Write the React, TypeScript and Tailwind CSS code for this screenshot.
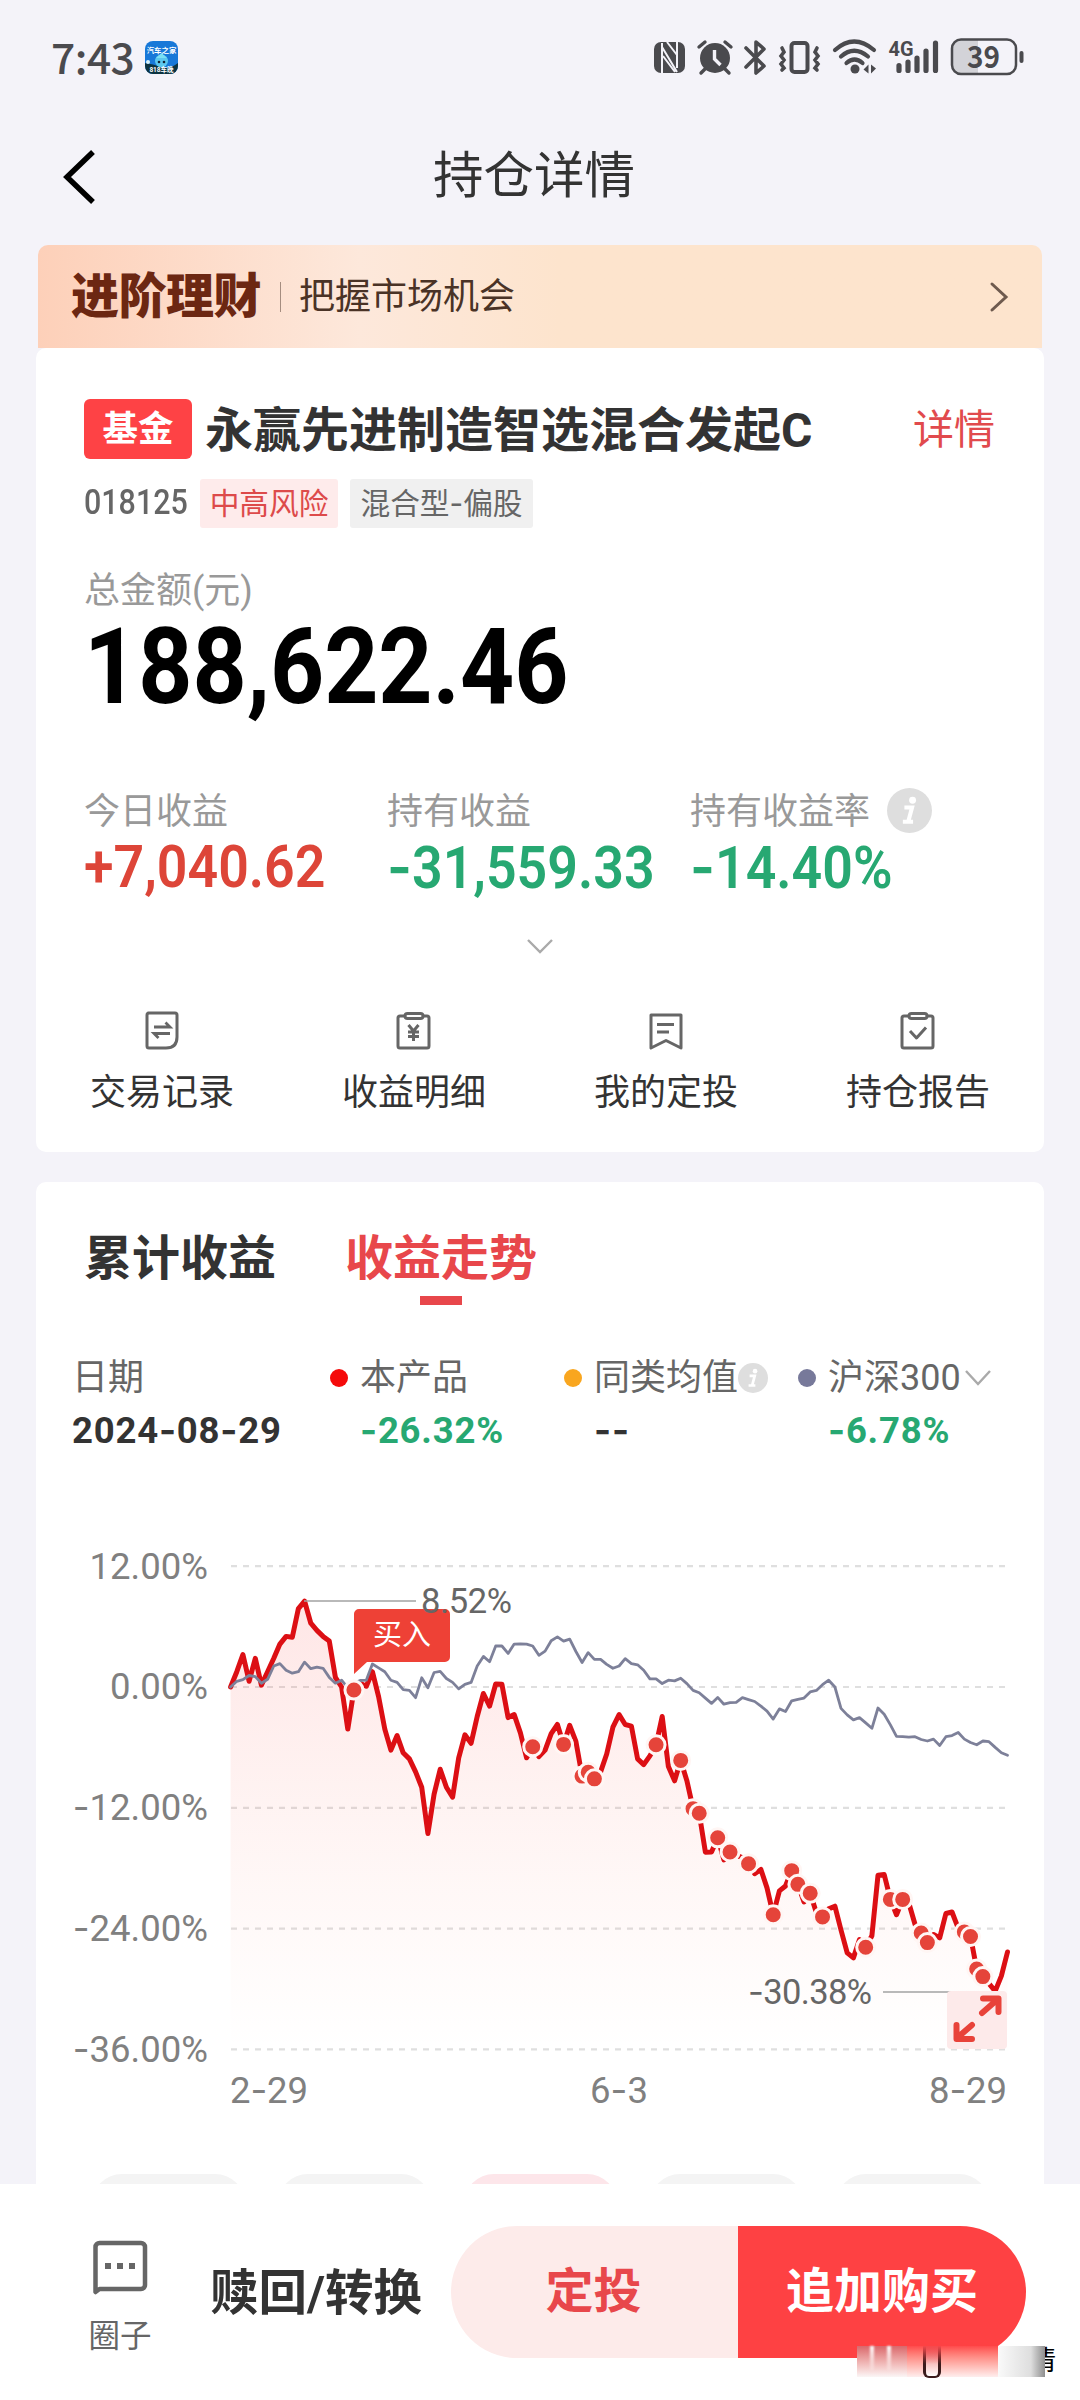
import type { ReactNode } from 'react'

const stats = [
  { label: '今日收益', value: '+7,040.62', color: 'text-[#dd4538]' },
  { label: '持有收益', value: '-31,559.33', color: 'text-[#27a872]' },
  { label: '持有收益率', value: '-14.40%', color: 'text-[#27a872]', info: true },
]

const legend = [
  { name: '本产品', value: '-26.32%', dot: 'bg-[#f50a0a]', color: 'text-[#27a872]' },
  { name: '同类均值', value: '--', dot: 'bg-[#f9a61f]', color: 'text-[#333333]', info: true },
  { name: '沪深300', value: '-6.78%', dot: 'bg-[#77799a]', color: 'text-[#27a872]', arrow: true },
]

// daily return in percent, 2-29 .. 8-29
const product = [
  0, 1.52, 3.23, 0.57, 2.85, 0.19, 1.52, 2.85, 4.26, 5.02, 4.94, 7.79, 8.52, 6.34, 5.62, 5.02, 4.56, 0.95, 0, -4.18,
  -0.3, 0.38, 0.08, 1.52, -0.95, -4.18, -6.27, -4.83, -6.53, -7.14, -8.43, -9.95, -14.55, -10.64, -8.17, -9.95,
  -10.94, -7.03, -4.75, -5.59, -2.93, -0.65, -1.9, 0.3, 0.27, -3.04, -2.74, -4.56, -7.03, -5.93, -6.91, -6.27,
  -4.64, -3.72, -5.7, -3.8, -5.4, -8.85, -8.47, -9.12, -8.43, -6.65, -3.99, -2.74, -3.72, -3.88, -7.14, -7.71,
  -6.84, -5.74, -2.93, -7.9, -9.31, -7.29, -9.31, -12.08, -12.54, -16.41, -16.38, -14.97, -17.17, -16.38, -16.72,
  -16.95, -17.55, -18.54, -18.12, -19.95, -22.61, -20.25, -19.76, -18.24, -19.6, -21.35, -20.48, -22.42, -22.83,
  -22.04, -21.77, -24.13, -26.41, -26.9, -25.08, -25.84, -24.7, -18.69, -18.62, -21.09, -22.61, -21.09, -21.47,
  -23.56, -24.43, -25.38, -24.58, -24.92, -22.49, -22.34, -23.94, -24.32, -24.77, -28, -28.76, -29.45, -30.2,
  -28.69, -26.32,
]

const csi300 = [
  0, 0.57, 0.72, 1.14, 1.03, 0.38, 0.76, 2.09, 2.32, 1.67, 1.37, 1.52, 2.47, 1.82, 1.98, 1.86, 0.95, 0.38, 0.68,
  -0.08, 0.38, 0.65, 0.68, 2.28, 1.9, 1.52, 0.68, 0.46, -0.27, -0.34, -1.06, 0.91, -0.08, 1.44, 1.56, 0.84, 0.46,
  -0.19, 0.27, 0.46, 2.09, 3.04, 2.51, 4.07, 4.07, 3.34, 4.26, 4.29, 4.26, 4.07, 3.15, 3.57, 4.6, 4.98, 4.56, 4.75,
  3.53, 2.43, 3.42, 2.74, 2.74, 2.24, 1.86, 2.09, 2.81, 2.32, 2.2, 1.67, 0.8, 0.8, 0.34, 0.68, 0.61, 0.87, 0.34,
  -0.34, -0.57, -1.1, -1.63, -1.03, -1.71, -1.56, -1.52, -1.06, -1.25, -1.44, -1.9, -2.39, -3.19, -2.17, -2.43,
  -1.37, -1.22, -1.1, -0.49, -0.34, 0.23, 0.68, 0, -2.13, -2.77, -3.27, -3.04, -3.57, -4.1, -2.09, -2.7, -3.76,
  -4.9, -4.94, -4.98, -4.94, -5.21, -5.36, -5.17, -5.81, -4.94, -4.83, -4.52, -5.17, -5.51, -5.74, -5.36, -5.43,
  -6, -6.53, -6.78,
]

const buys = [
  20, 49, 54, 57, 58, 59, 69, 73, 75, 76, 79, 81, 84, 88, 91, 92, 94, 96, 103, 107, 109, 112, 113, 119, 120, 121, 122,
]

const px = (i: number) => 194.6 + i * 6.166
const py = (v: number) => 147 - v * 10.07
const toPoints = (list: number[]) => list.map((v, i) => `${px(i).toFixed(1)},${py(v).toFixed(1)}`).join(' ')

// hyphens are set in Inter, its dash is wide enough for figures
function Num({ children }: { children: string }) {
  return (
    <>
      {children.split(/(-)/).map((part, i) =>
        part === '-' ? (
          <span key={i} className="font-['Inter']">-</span>
        ) : (
          part
        )
      )}
    </>
  )
}

function Info({ className }: { className: string }) {
  return (
    <svg viewBox="0 0 44 44" className={className}>
      <circle cx="22" cy="22" r="22" fill="#dedede" />
      <circle cx="25" cy="12" r="3.4" fill="#fff" />
      <path d="M17 19h7.5l-3.5 13M15.5 33h10" fill="none" stroke="#fff" strokeWidth="4" />
    </svg>
  )
}

function StatusBar() {
  return (
    <div className="flex h-[116px] items-start pl-[51px] pt-[38px] text-[#4a4a4e]">
      <div className="w-[94px] font-['Noto_Sans_CJK_SC'] text-[42.500px] font-medium leading-[36px] tracking-[-0.5px]">7:43</div>
      <svg width="33" height="33" viewBox="0 0 33 33" className="mt-[3px]">
        <defs>
          <clipPath id="app"><rect width="33" height="33" rx="8" /></clipPath>
        </defs>
        <g clipPath="url(#app)">
          <rect width="33" height="33" fill="#1878d8" />
          <path d="M0 22q8 1 16 4t17-4v11H0z" fill="#0c3340" />
          <circle cx="16.5" cy="20" r="6.5" fill="#5cc8ee" />
          <path d="M11 17l5.5-5 5.5 5z" fill="#7ce0f4" />
          <circle cx="14" cy="21" r="1.3" fill="#123" />
          <circle cx="19" cy="21" r="1.3" fill="#123" />
          <circle cx="3" cy="21" r="2" fill="#d8f2fa" />
          <text x="16.5" y="12" fontSize="7.4" fontWeight="700" fill="#fff" textAnchor="middle">汽车之家</text>
          <text x="16.5" y="31" fontSize="6.5" fontWeight="700" fill="#fff" textAnchor="middle">818车晚</text>
        </g>
      </svg>
      <svg width="380" height="40" viewBox="0 0 380 40" className="ml-[466px] overflow-visible" fill="none" stroke="#4a4a4e">
        {/* nfc */}
        <rect x="10" y="4" width="31" height="31" rx="7" fill="#4a4a4e" stroke="none" />
        <path d="M18 35V5M18 9l15 25M19 18l12 16M33 30V4M23 4l10 13" stroke="#f4f3f9" strokeWidth="2" />
        {/* alarm */}
        <circle cx="71" cy="20" r="15" fill="#4a4a4e" stroke="none" />
        <path d="M55 9l6-5M87 9l-6-5M61 31l-4 4M81 31l4 4" strokeWidth="3.4" strokeLinecap="round" />
        <path d="M70.500 12v9l6 6" stroke="#f4f3f9" strokeWidth="3.400" />
        {/* bluetooth */}
        <path d="M102 10l18 18-8 7V4l8 7-18 18" strokeWidth="3.600" strokeLinejoin="round" strokeLinecap="round" />
        {/* vibrate */}
        <rect x="147.500" y="5" width="16" height="29" rx="3" strokeWidth="4" />
        <path d="M138 10l2 4-3 4 3 4-3 4 3 4-2 2M173 10l-2 4 3 4-3 4 3 4-3 4 2 2" strokeWidth="3.600" strokeLinecap="round" />
        {/* wifi */}
        <path d="M191 12q19-17 39 0M197 18.500q13-11.500 27 0M202.500 25q8-7 16 0" strokeWidth="4.200" strokeLinecap="round" />
        <circle cx="211" cy="31" r="4.500" fill="#4a4a4e" stroke="none" />
        <path d="M219.500 31.500l5-5v9zM232 30.500l-5-4v9z" fill="#4a4a4e" stroke="none" />
        {/* signal */}
        <text x="244.500" y="18" fontSize="21" fontWeight="700" fill="#4a4a4e" stroke="none" textLength="25" lengthAdjust="spacingAndGlyphs" className="font-['Roboto']">4G</text>
        <path d="M255 27.500v5M264 24v8.500M273 20v12.500M282 13v19.500M291.500 5v27.500" strokeWidth="5.200" strokeLinecap="round" />
        {/* battery */}
        <path d="M334 2h-17a9 9 0 00-9 9v16a9 9 0 009 9h17z" fill="#d3d3d8" stroke="none" />
        <rect x="308" y="1.500" width="64" height="34.500" rx="9" strokeWidth="2.500" />
        <path d="M377.500 15v8" strokeWidth="4" strokeLinecap="round" />
        <text x="339.500" y="30" fontSize="31" fontWeight="700" fill="#4a4a4e" stroke="none" textAnchor="middle" textLength="33" lengthAdjust="spacingAndGlyphs" className="font-['Noto_Sans_CJK_SC']">39</text>
      </svg>
    </div>
  )
}

function Header() {
  return (
    <div className="flex h-[129px] items-start">
      <svg width="34" height="58" viewBox="0 0 34 58" className="ml-[62px] mt-[32px]" fill="none" stroke="#000" strokeWidth="5.500">
        <path d="M31 4L5 29l26 25" />
      </svg>
      <div className="ml-[337px] mt-[35px] text-[50.500px] leading-none text-[#333333]">持仓详情</div>
    </div>
  )
}

function Banner() {
  return (
    <div className="mx-[38px] flex h-[103px] items-center rounded-t-[10px] bg-linear-to-r from-[#fdd0b9] via-[#fde8db] via-32% to-[#fde4cd] to-52% pl-[33px] pr-[33px]">
      <div className="w-[192px] text-[48px] font-black leading-none tracking-[-0.5px] text-[#6c2712]">进阶理财</div>
      <div className="ml-[17px] h-[30px] w-px bg-[#a58d80]" />
      <div className="ml-[18px] text-[36px] leading-none text-[#4a3326]">把握市场机会</div>
      <svg width="20" height="32" viewBox="0 0 20 32" className="ml-auto" fill="none" stroke="#6e5a4e" strokeWidth="3" strokeLinecap="round">
        <path d="M3 3l14 13L3 29" />
      </svg>
    </div>
  )
}

function Action({ label, children }: { label: string; children: ReactNode }) {
  return (
    <div className="flex flex-1 flex-col items-center">
      <svg width="40" height="42" viewBox="0 0 40 42" fill="none" stroke="#666" strokeWidth="3" strokeLinejoin="round">
        {children}
      </svg>
      <div className="mt-[23px] text-[36px] leading-none text-[#333333]">{label}</div>
    </div>
  )
}

function Summary() {
  return (
    <div className="mx-[36px] h-[804px] rounded-[10px] bg-white pt-[51px]">
      <div className="flex h-[60px] items-center pl-[48px] pr-[49px]">
        <div className="flex h-[60px] w-[108px] items-center justify-center rounded-[6px] bg-[#fe4245] pt-[2px] text-[35.500px] font-bold leading-none text-white">基金</div>
        <div className="ml-[13px] pt-[3px] text-[48px] font-bold leading-none text-[#333333]">永赢先进制造智选混合发起C</div>
        <div className="ml-auto pt-[2px] text-[41px] leading-none text-[#e14a4d]">详情</div>
      </div>
      <div className="mt-[20px] flex h-[49px] items-center pl-[48px]">
        <div className="w-[116px]">
          <div className="w-[116px] origin-left scale-x-[0.87] pb-[3px] text-[35px] font-medium leading-none text-[#666666]">018125</div>
        </div>
        <div className="flex h-[49px] w-[138px] items-center justify-center rounded-[3px] bg-[#feebeb] text-[29.700px] leading-none text-[#dd4a4a]">中高风险</div>
        <div className="ml-[12px] flex h-[49px] w-[183px] items-center justify-center whitespace-nowrap rounded-[3px] bg-[#f0f0f0] text-[29.700px] leading-none text-[#666666]">
          <Num>混合型-偏股</Num>
        </div>
      </div>
      <div className="ml-[48px] mt-[45px] text-[36px] leading-[36px] text-[#999999]">总金额(元)</div>
      <div className="mt-[6px] ml-[48px] w-[530px] origin-left scale-x-[0.9] text-[105px] font-bold leading-none text-black">188,622.46</div>

      <div className="mt-[74px] flex pl-[48px]">
        {stats.map((s) => (
          <div key={s.label} className="w-[303px]">
            <div className="flex h-[36px] items-center text-[36px] leading-none text-[#999999]">
              {s.label}
              {s.info && <Info className="-mt-[3px] ml-[17px] size-[45px]" />}
            </div>
            <div className={`mt-[7px] w-[303px] origin-left scale-x-[0.91] whitespace-nowrap text-[59px] font-semibold leading-none ${s.color}`}>
              <Num>{s.value}</Num>
            </div>
          </div>
        ))}
      </div>

      <svg width="28" height="18" viewBox="0 0 28 18" className="mx-auto mt-[41px]" fill="none" stroke="#aaa" strokeWidth="2.400">
        <path d="M2 2l12 12L26 2" />
      </svg>

      <div className="mt-[54px] flex">
        <Action label="交易记录">
          <path d="M6 3h27a2 2 0 012 2v22q0 11-11 11H7a2 2 0 01-2-2V5a2 2 0 012-2z" />
          <path d="M12 17h16l-4.500-4.500M28 23.500H12l4.500 4.500" strokeWidth="2.800" strokeLinejoin="miter" />
        </Action>
        <Action label="收益明细">
          <path d="M11 6H6a2 2 0 00-2 2v28a2 2 0 002 2h27a2 2 0 002-2V8a2 2 0 00-2-2h-5" />
          <rect x="11" y="3.500" width="18" height="5" rx="2.500" />
          <path d="M14.500 15l5 6 5-6M19.500 21v10M14 22h11M14 26.500h11" strokeWidth="3" />
        </Action>
        <Action label="我的定投">
          <path d="M5 5h30v33l-15-7.500L5 38z" />
          <path d="M11 14.500h17M11 22h12" />
        </Action>
        <Action label="持仓报告">
          <path d="M11 6H6a2 2 0 00-2 2v28a2 2 0 002 2h27a2 2 0 002-2V8a2 2 0 00-2-2h-5" />
          <rect x="11" y="3.500" width="18" height="5" rx="2.500" />
          <path d="M12 21l6.500 7L28 17.500" />
        </Action>
      </div>
    </div>
  )
}

function Chart() {
  const line = toPoints(product)
  return (
    <svg width="1008" height="600" viewBox="0 0 1008 600" className="mt-[90px] block font-['Roboto']" fill="none">
      <defs>
        <linearGradient id="area" x1="0" y1="55" x2="0" y2="509" gradientUnits="userSpaceOnUse">
          <stop offset="0" stopColor="#fb3b3b" stopOpacity="0.13" />
          <stop offset="0.5" stopColor="#fb4b3b" stopOpacity="0.06" />
          <stop offset="1" stopColor="#fb5b3b" stopOpacity="0" />
        </linearGradient>
      </defs>
      {['12.00%', '0.00%', '-12.00%', '-24.00%', '-36.00%'].map((t, i) => (
        <g key={t}>
          <text x="172" y={38.5 + i * 120.8} fontSize="36.500" fill="#808080" textAnchor="end">
            {t.startsWith('-') ? <><tspan className="font-['Inter']">-</tspan>{t.slice(1)}</> : t}
          </text>
          <path d={`M195 ${26.2 + i * 120.8}H969`} stroke="#dfdfdf" strokeWidth="2.200" strokeDasharray="6 6" />
        </g>
      ))}
      <polygon points={`${px(0)},509 ${line} ${px(126)},509`} fill="url(#area)" />
      <polyline points={line} stroke="#dc0f14" strokeWidth="5" strokeLinejoin="round" strokeLinecap="round" />
      <polyline points={toPoints(csi300)} stroke="#7d8099" strokeWidth="2.800" strokeLinejoin="round" strokeLinecap="round" />

      <path d="M268 61H380M847 452h104" stroke="#a3a3a3" strokeWidth="1.600" />
      <path d="M323 69h86a5 5 0 015 5v43a5 5 0 01-5 5h-78l-13 12V74a5 5 0 015-5z" fill="#ee4136" />
      <text x="366" y="105" fontSize="29" fill="#fff" textAnchor="middle" className="font-['Noto_Sans_CJK_SC']">买入</text>
      <text x="385" y="73" fontSize="34.500" fill="#666" textLength="91">8.52%</text>

      {buys.map((i) => (
        <circle key={i} cx={px(i)} cy={py(product[i])} r="9" fill="#e5443a" stroke="#fff6f4" strokeWidth="3" />
      ))}

      <rect x="911" y="451" width="60" height="58" rx="4" fill="#fdeaea" />
      <g stroke="#e8433a" strokeWidth="6" strokeLinecap="round" strokeLinejoin="round">
        <path d="M946 473l16-14M947 458.500h15.500V472M936 485l-15 13M920.500 485v14H936" />
      </g>
      <text x="712" y="464" fontSize="34.500" fill="#666" textLength="124">
        <tspan className="font-['Inter']">-</tspan>30.38%
      </text>

      <g fontSize="36.500" fill="#808080">
        <text x="194" y="563" textLength="78">2<tspan className="font-['Inter']">-</tspan>29</text>
        <text x="583" y="563" textAnchor="middle">6<tspan className="font-['Inter']">-</tspan>3</text>
        <text x="971" y="563" textAnchor="end" textLength="78">8<tspan className="font-['Inter']">-</tspan>29</text>
      </g>
    </svg>
  )
}

function Trend() {
  return (
    <div className="mx-[36px] mt-[30px] h-[1002px] overflow-hidden rounded-t-[10px] bg-white pt-[53px]">
      <div className="flex gap-[69px] pl-[48px] text-[48px] font-bold leading-none">
        <div className="text-[#333333]">累计收益</div>
        <div className="flex flex-col items-center text-[#e8474b]">
          收益走势
          <div className="mt-[13px] h-[9px] w-[42px] bg-[#e8474b]" />
        </div>
      </div>

      <div className="mt-[55px] flex pl-[36px]">
        <div className="w-[258px]">
          <div className="text-[36px] leading-none text-[#666666]">日期</div>
          <div className="mt-[16px] whitespace-nowrap text-[36.500px] font-bold leading-none tracking-[0.8px] text-[#333333]"><Num>2024-08-29</Num></div>
        </div>
        {legend.map((l) => (
          <div key={l.name} className="w-[234px]">
            <div className="flex h-[36px] items-center whitespace-nowrap text-[36px] leading-none text-[#666666]">
              <span className={`mr-[12px] size-[18px] shrink-0 rounded-full ${l.dot}`} />
              {l.name}
              {l.info && <Info className="size-[30px] shrink-0" />}
              {l.arrow && (
                <svg width="28" height="18" viewBox="0 0 28 18" className="ml-[3px] shrink-0" fill="none" stroke="#aaa" strokeWidth="2.400">
                  <path d="M2 2l12 13L26 2" />
                </svg>
              )}
            </div>
            <div className={`mt-[16px] pl-[30px] text-[36.500px] font-bold leading-none tracking-[0.8px] ${l.color}`}>
              <Num>{l.value}</Num>
            </div>
          </div>
        ))}
      </div>

      <Chart />

      <div className="mt-[34px] flex gap-[33px] pl-[56px]">
        <div className="h-[60px] w-[153px] rounded-full bg-[#f4f4f4]" />
        <div className="h-[60px] w-[153px] rounded-full bg-[#f4f4f4]" />
        <div className="h-[60px] w-[153px] rounded-full bg-[#fde6ea]" />
        <div className="h-[60px] w-[153px] rounded-full bg-[#f4f4f4]" />
        <div className="h-[60px] w-[153px] rounded-full bg-[#f4f4f4]" />
      </div>
    </div>
  )
}

function BottomBar() {
  return (
    <div className="relative flex h-[216px] items-start bg-white pt-[42px]">
      <div className="ml-[80px] mt-[14px] flex w-[80px] flex-col items-center">
        <svg width="56" height="56" viewBox="0 0 56 56" fill="none" stroke="#666" strokeWidth="4.500">
          <path d="M3.500 52V7a4 4 0 014-4H49a4 4 0 014 4v38a4 4 0 01-4 4H7.500z" strokeLinejoin="round" />
          <path d="M13 26h6M25 26h6M37 26h6" strokeWidth="6" />
        </svg>
        <div className="mt-[25px] text-[31.500px] leading-none text-[#666666]">圈子</div>
      </div>
      <div className="ml-[50px] mt-[44px] w-[241px] text-[48.500px] font-bold leading-none text-[#333333]">赎回/转换</div>
      <button className="h-[132px] w-[287px] rounded-l-full bg-[#fdebea] pr-[2px] text-[48px] font-bold leading-none text-[#e8474b]">定投</button>
      <button className="h-[132px] w-[288px] rounded-r-full bg-[#fe4143] text-[48px] font-bold leading-none text-white">追加购买</button>

      {/* smudged corner mark */}
      <div className="absolute left-[857px] top-[162px] flex h-[31px] w-[200px]">
        <div className="h-full w-[50px] bg-linear-to-b from-[#d8686c] to-[#fbf6f6]" />
        <div className="h-full w-[91px] bg-linear-to-b from-[#fe4a4c] to-[#fdeeee]" />
        <div className="h-full w-[47px] bg-linear-to-r from-[#fafafa] via-[#dedede] via-70% to-[#8f8f8f]" />
        <div className="flex h-full w-[11px] justify-end overflow-hidden text-[27px] leading-[30px] text-black"><span>情</span></div>
        <div className="absolute left-[13px] h-[24px] w-[4px] bg-linear-to-b from-white to-white/20 blur-[1px]" />
        <div className="absolute left-[30px] h-[24px] w-[4px] bg-linear-to-b from-white to-white/20 blur-[1px]" />
        <div className="absolute left-[66px] h-[32px] w-[18px] rounded-b-[6px] border-x-3 border-b-2 border-[#3a1c1c] bg-linear-to-b from-[#e06a6c] to-white" />
        <div className="absolute left-[66px] h-[18px] w-[18px] bg-linear-to-b from-[#f5494c] to-transparent" />
      </div>
    </div>
  )
}

export default function App() {
  return (
    <div className="h-[2400px] w-[1080px] overflow-hidden bg-[#f4f3f9] font-['Roboto','Noto_Sans_CJK_SC',sans-serif]">
      <StatusBar />
      <Header />
      <Banner />
      <Summary />
      <Trend />
      <BottomBar />
    </div>
  )
}
